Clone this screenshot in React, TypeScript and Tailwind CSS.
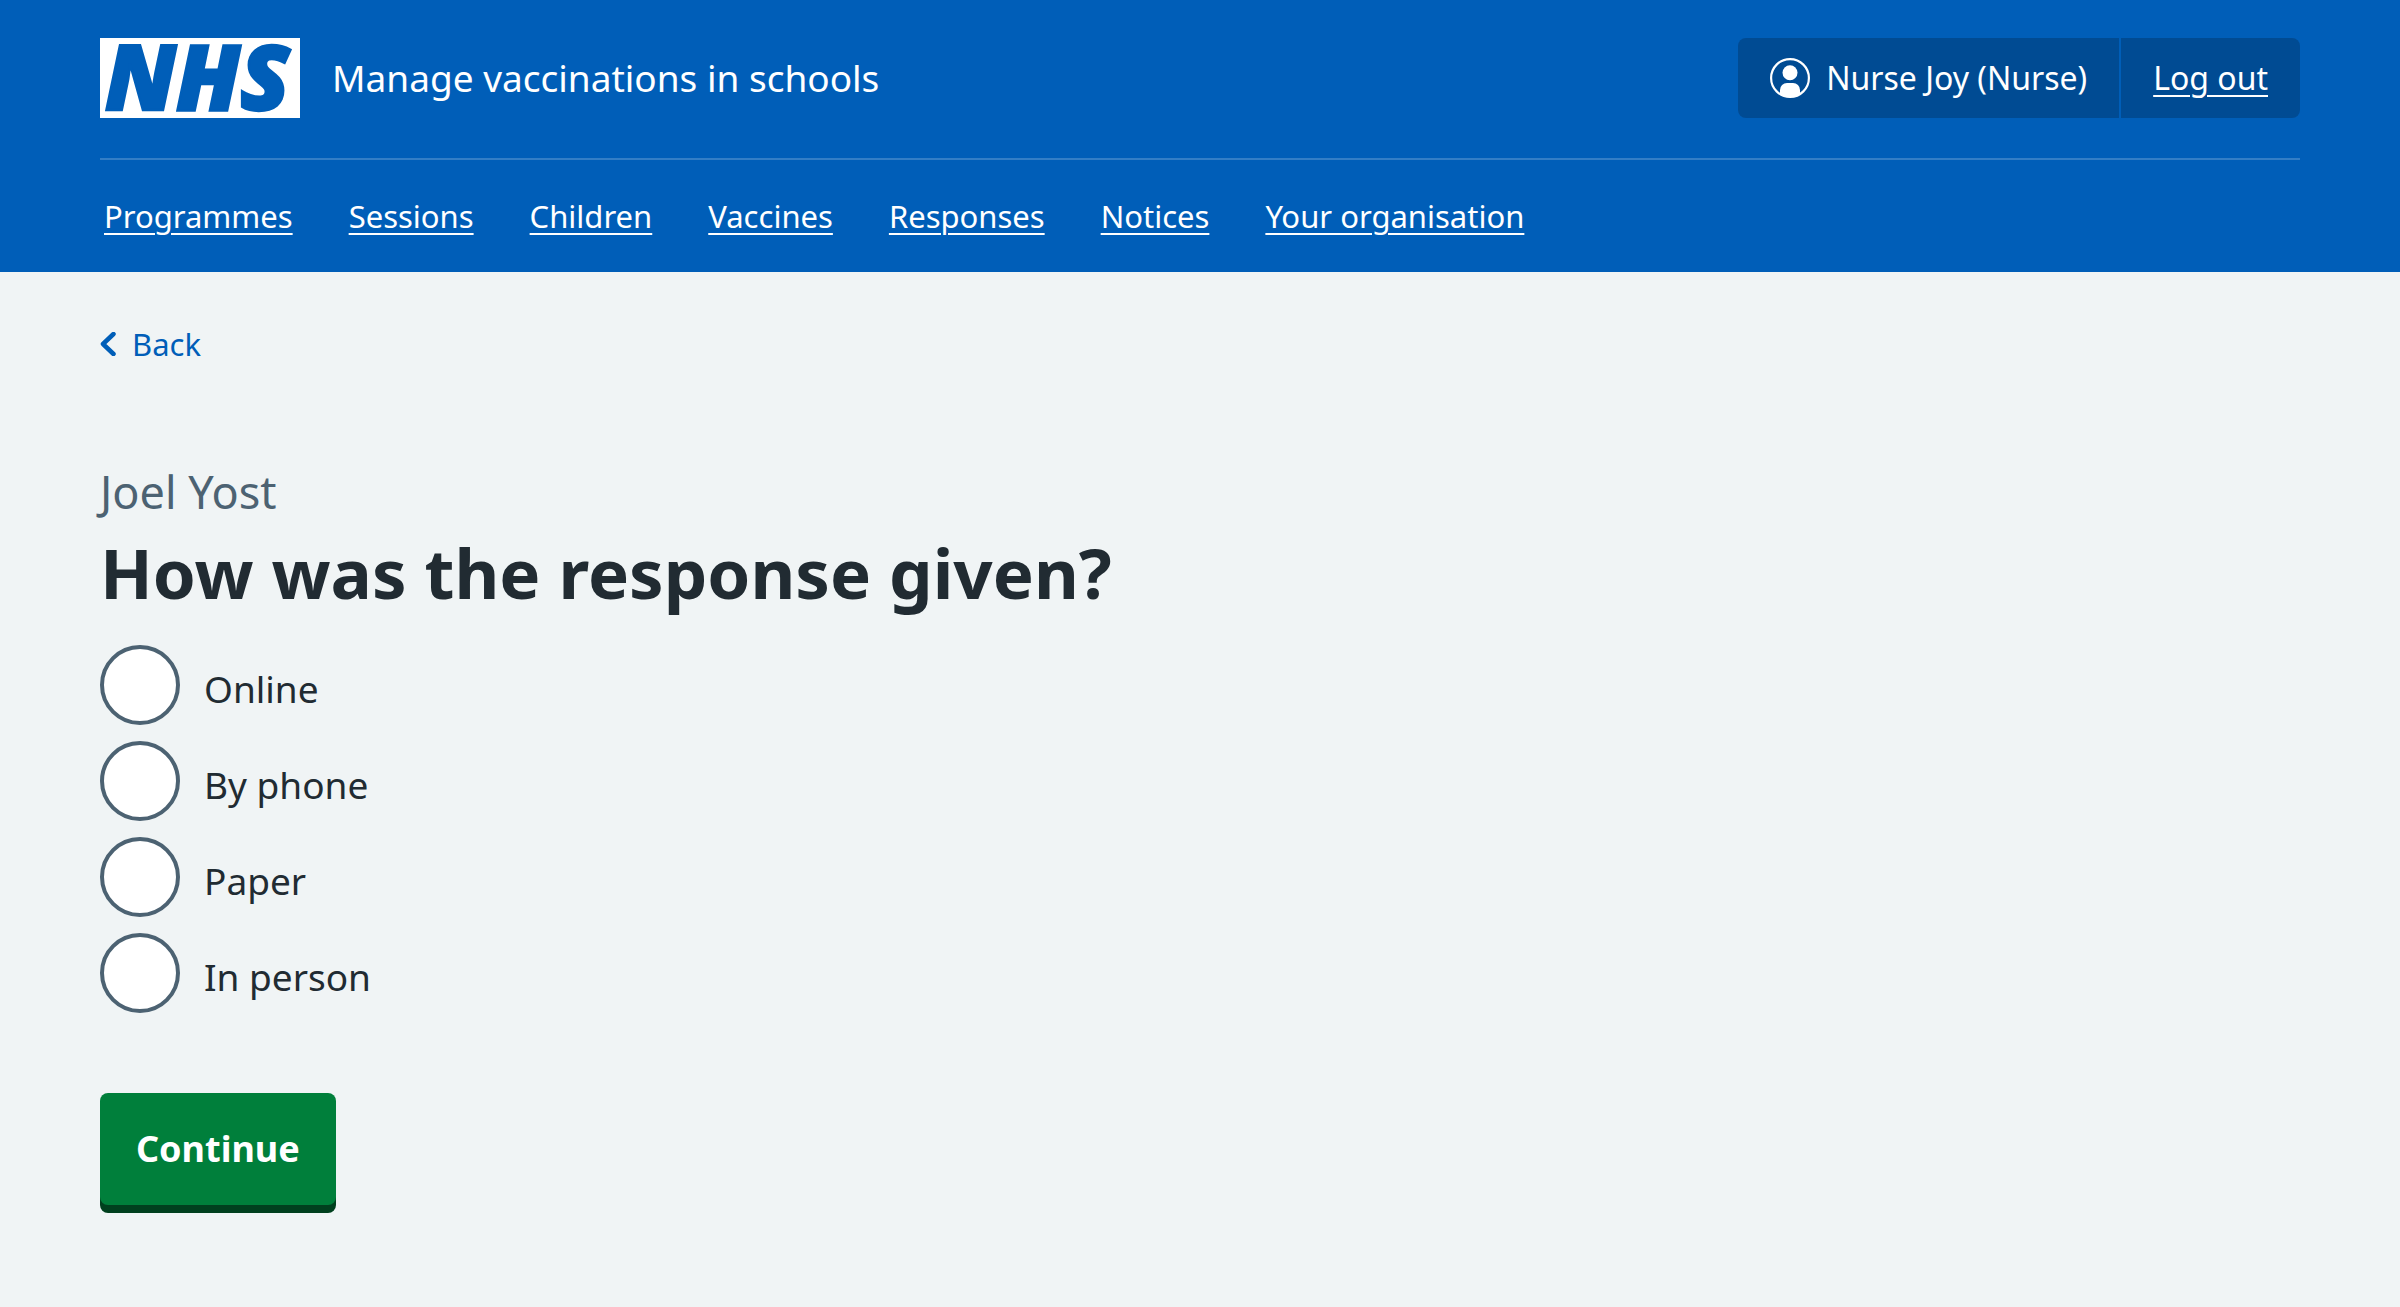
const navItems = [
  "Programmes",
  "Sessions",
  "Children",
  "Vaccines",
  "Responses",
  "Notices",
  "Your organisation",
];

const responseMethods = [
  { value: "online", label: "Online" },
  { value: "phone", label: "By phone" },
  { value: "paper", label: "Paper" },
  { value: "in-person", label: "In person" },
];

function NhsLogo() {
  return (
    <svg className="h-20 w-[200px] shrink-0 overflow-visible" viewBox="0 0 200 80" role="img" aria-label="NHS">
      <rect width="200" height="80" fill="#ffffff" />
      <text
        x="5"
        y="72"
        fill="#005eb8"
        stroke="#005eb8"
        strokeWidth="2.5"
        fontFamily="'Open Sans', 'Noto Sans', sans-serif"
        fontSize="90"
        fontStyle="italic"
        fontWeight="800"
      >
        NHS
      </text>
    </svg>
  );
}

function UserIcon() {
  return (
    <svg className="size-10 shrink-0" viewBox="0 0 40 40" aria-hidden="true">
      <circle cx="20" cy="20" r="18.9" fill="none" stroke="#ffffff" strokeWidth="2.2" />
      <circle cx="20" cy="14.700" r="7.500" fill="#ffffff" />
      <path
        d="M10 36.500V32a7 7 0 0 1 7-7h6a7 7 0 0 1 7 7v4.500A19 19 0 0 1 10 36.500Z"
        fill="#ffffff"
      />
    </svg>
  );
}

function Header() {
  return (
    <header className="bg-[#005eb8] px-[100px] pt-[38px] text-white">
      <div className="flex items-center justify-between pb-10">
        <a href="#" className="flex items-center gap-8">
          <NhsLogo />
          <span className="text-[37px] leading-14">Manage vaccinations in schools</span>
        </a>
        <div className="flex h-20 gap-0.5 overflow-hidden rounded-lg text-[32px] leading-12">
          <div className="flex items-center gap-4 bg-[#004b93] px-8">
            <UserIcon />
            <span>Nurse Joy (Nurse)</span>
          </div>
          <a
            href="#"
            className="flex items-center bg-[#004b93] px-8 underline decoration-2 underline-offset-[5px]"
          >
            Log out
          </a>
        </div>
      </div>
      <nav aria-label="Primary" className="border-t-2 border-[#337ec6] px-1 py-8">
        <ul className="flex gap-14">
          {navItems.map((item) => (
            <li key={item}>
              <a
                href="#"
                className="block text-[31px] leading-12 underline decoration-2 underline-offset-[5px]"
              >
                {item}
              </a>
            </li>
          ))}
        </ul>
      </nav>
    </header>
  );
}

export default function App() {
  return (
    <div className="min-h-screen bg-[#f0f4f5] font-['Noto_Sans','Open_Sans',sans-serif] text-[#212b32]">
      <Header />
      <main className="px-[100px] pt-12 pb-[94px]">
        <a href="#" className="inline-flex items-center gap-4 text-[31px] leading-12 text-[#005eb8]">
          <svg className="h-6 w-4" viewBox="0 0 16 24" aria-hidden="true">
            <path
              d="M13.500 2 3 12l10.500 10"
              fill="none"
              stroke="currentColor"
              strokeWidth="4.500"
              strokeLinecap="round"
              strokeLinejoin="round"
            />
          </svg>
          Back
        </a>
        <form className="mt-24" onSubmit={(event) => event.preventDefault()}>
          <fieldset>
            <legend className="mb-[29px]">
              <span className="block text-[45px] leading-14 text-[#4c6272]">Joel Yost</span>
              <h1 className="mt-2 text-[69px] leading-[88px] font-bold">
                How was the response given?
              </h1>
            </legend>
            <div className="flex flex-col gap-4">
              {responseMethods.map(({ value, label }) => (
                <div key={value} className="flex items-center gap-6">
                  <input
                    type="radio"
                    id={value}
                    name="response-method"
                    value={value}
                    className="size-20 shrink-0 appearance-none rounded-full border-4 border-[#4c6272] bg-white checked:bg-[#212b32] checked:shadow-[inset_0_0_0_16px_#ffffff]"
                  />
                  <label htmlFor={value} className="pt-2 text-[37px] leading-14">
                    {label}
                  </label>
                </div>
              ))}
            </div>
          </fieldset>
          <button
            type="submit"
            className="mt-20 rounded-lg bg-[#007f3b] px-9 py-7 text-[36px] leading-14 font-bold text-white shadow-[0_8px_0_#00401e]"
          >
            Continue
          </button>
        </form>
      </main>
    </div>
  );
}
